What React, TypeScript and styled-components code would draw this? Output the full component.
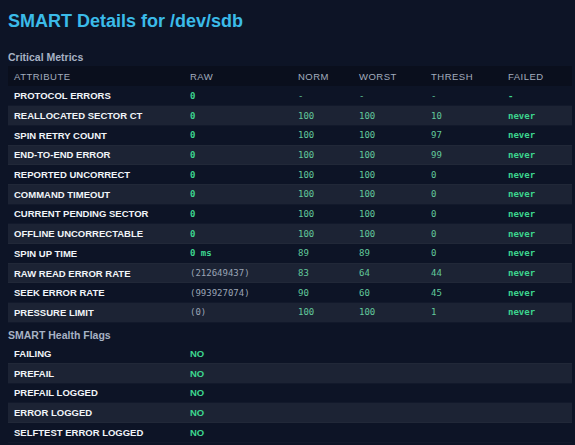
import styled, { createGlobalStyle } from 'styled-components';

const GlobalStyle = createGlobalStyle`
  html, body {
    margin: 0;
    padding: 0;
    background: #0d1426;
  }
`;

const Page = styled.div`
  width: 575px;
  height: 445px;
  box-sizing: border-box;
  padding: 10px 3px 0 8px;
  background: #0d1426;
  font-family: 'Liberation Sans', Arial, sans-serif;
  overflow: hidden;
`;

const Title = styled.h1`
  margin: 0;
  font-size: 18px;
  line-height: 22px;
  font-weight: 700;
  color: #3bbbe9;
`;

const SectionLabel = styled.div<{ $top: number }>`
  margin: ${(p) => p.$top}px 0 2px 0;
  font-size: 10.5px;
  line-height: 14px;
  font-weight: 700;
  color: #a7b2c4;
`;

const Table = styled.table`
  width: 564px;
  border-collapse: collapse;
  table-layout: fixed;
`;

const HeadCell = styled.th`
  height: 20px;
  padding: 0 6px;
  background: #0a0f1d;
  color: #a3adbd;
  font-size: 9.5px;
  font-weight: 500;
  letter-spacing: 0.5px;
  text-align: left;
  text-transform: uppercase;
`;

const Row = styled.tr`
  height: 19.7px;
  border-bottom: 1px solid rgba(255, 255, 255, 0.025);

  &:nth-child(even) {
    background: #1c2334;
  }
`;

const LabelCell = styled.td`
  padding: 0 6px;
  color: #f1f5f9;
  font-size: 9.5px;
  font-weight: 700;
  text-transform: uppercase;
  white-space: nowrap;
`;

const ValueCell = styled.td<{ $tone: 'ok' | 'num' | 'muted' }>`
  padding: 0 6px;
  font-family: 'DejaVu Sans Mono', 'Liberation Mono', monospace;
  font-size: 9px;
  white-space: nowrap;
  font-weight: ${(p) => (p.$tone === 'ok' ? 700 : 400)};
  color: ${(p) =>
    p.$tone === 'ok' ? '#3dd68f' : p.$tone === 'num' ? '#62c99b' : '#9aa4b4'};
`;

const FlagCell = styled.td`
  padding: 0 6px;
  color: #3dd68f;
  font-size: 9.5px;
  font-weight: 700;
`;

type Metric = {
  name: string;
  raw: string;
  rawTone: 'ok' | 'muted';
  norm: string;
  worst: string;
  thresh: string;
  failed: string;
};

const metrics: Metric[] = [
  { name: 'Protocol Errors', raw: '0', rawTone: 'ok', norm: '-', worst: '-', thresh: '-', failed: '-' },
  { name: 'Reallocated Sector Ct', raw: '0', rawTone: 'ok', norm: '100', worst: '100', thresh: '10', failed: 'never' },
  { name: 'Spin Retry Count', raw: '0', rawTone: 'ok', norm: '100', worst: '100', thresh: '97', failed: 'never' },
  { name: 'End-to-End Error', raw: '0', rawTone: 'ok', norm: '100', worst: '100', thresh: '99', failed: 'never' },
  { name: 'Reported Uncorrect', raw: '0', rawTone: 'ok', norm: '100', worst: '100', thresh: '0', failed: 'never' },
  { name: 'Command Timeout', raw: '0', rawTone: 'ok', norm: '100', worst: '100', thresh: '0', failed: 'never' },
  { name: 'Current Pending Sector', raw: '0', rawTone: 'ok', norm: '100', worst: '100', thresh: '0', failed: 'never' },
  { name: 'Offline Uncorrectable', raw: '0', rawTone: 'ok', norm: '100', worst: '100', thresh: '0', failed: 'never' },
  { name: 'Spin Up Time', raw: '0 ms', rawTone: 'ok', norm: '89', worst: '89', thresh: '0', failed: 'never' },
  { name: 'Raw Read Error Rate', raw: '(212649437)', rawTone: 'muted', norm: '83', worst: '64', thresh: '44', failed: 'never' },
  { name: 'Seek Error Rate', raw: '(993927074)', rawTone: 'muted', norm: '90', worst: '60', thresh: '45', failed: 'never' },
  { name: 'Pressure Limit', raw: '(0)', rawTone: 'muted', norm: '100', worst: '100', thresh: '1', failed: 'never' },
];

const flags = ['Failing', 'Prefail', 'Prefail Logged', 'Error Logged', 'Selftest Error Logged'];

const widths = [176, 108, 61, 72, 77, 70];

export default function App() {
  return (
    <Page>
      <GlobalStyle />
      <Title>SMART Details for /dev/sdb</Title>

      <SectionLabel $top={18}>Critical Metrics</SectionLabel>
      <Table>
        <colgroup>
          {widths.map((w, i) => (
            <col key={i} style={{ width: w }} />
          ))}
        </colgroup>
        <thead>
          <tr>
            <HeadCell>Attribute</HeadCell>
            <HeadCell>Raw</HeadCell>
            <HeadCell>Norm</HeadCell>
            <HeadCell>Worst</HeadCell>
            <HeadCell>Thresh</HeadCell>
            <HeadCell>Failed</HeadCell>
          </tr>
        </thead>
        <tbody>
          {metrics.map((m) => (
            <Row key={m.name}>
              <LabelCell>{m.name}</LabelCell>
              <ValueCell $tone={m.rawTone}>{m.raw}</ValueCell>
              <ValueCell $tone="num">{m.norm}</ValueCell>
              <ValueCell $tone="num">{m.worst}</ValueCell>
              <ValueCell $tone="num">{m.thresh}</ValueCell>
              <ValueCell $tone="ok">{m.failed}</ValueCell>
            </Row>
          ))}
        </tbody>
      </Table>

      <SectionLabel $top={5}>SMART Health Flags</SectionLabel>
      <Table>
        <colgroup>
          <col style={{ width: 176 }} />
          <col />
        </colgroup>
        <tbody>
          {flags.map((f) => (
            <Row key={f}>
              <LabelCell>{f}</LabelCell>
              <FlagCell>NO</FlagCell>
            </Row>
          ))}
        </tbody>
      </Table>
    </Page>
  );
}
